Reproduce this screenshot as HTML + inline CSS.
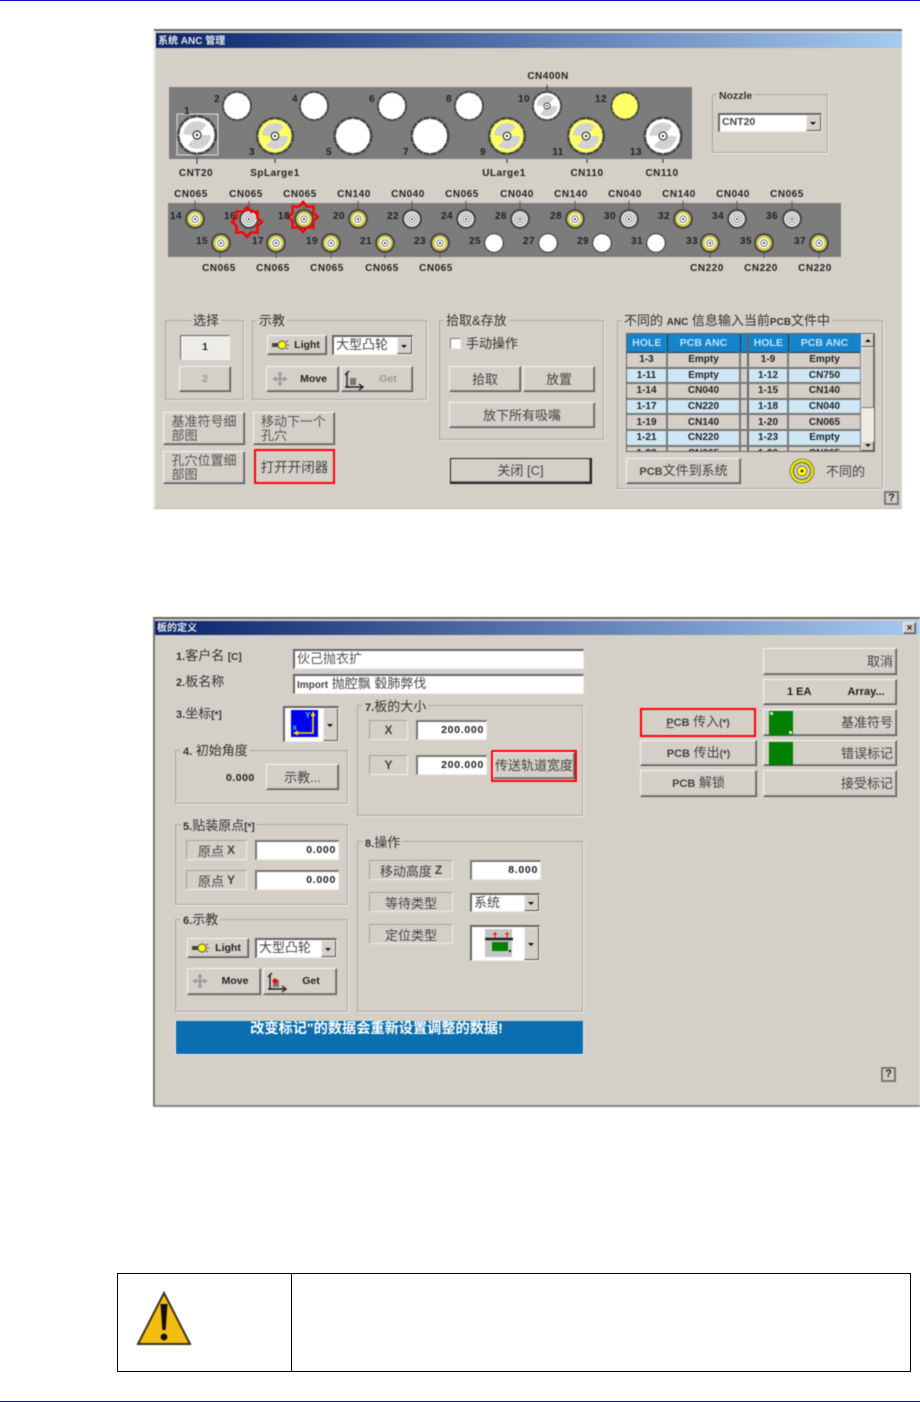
<!DOCTYPE html>
<html lang="zh"><head><meta charset="utf-8"><title>ANC</title>
<style>
html,body{margin:0;padding:0;background:#fff}
#p{position:relative;width:920px;height:1402px;overflow:hidden;background:#fff;font-family:"Liberation Sans","Noto Sans CJK SC",sans-serif;color:#333}
#p div{box-sizing:border-box}
.a{position:absolute}
.dlg{position:absolute;background:#d4d0c8;border-top:2px solid #666}
.tb{position:absolute;background:linear-gradient(90deg,#0a246a,#a6caf0)}
.tt{position:absolute;color:#e8e8e8;font-size:10px;font-weight:bold;white-space:nowrap;line-height:14px}
.b{position:absolute;background:#d4d0c8;border:1px solid;border-color:#f4f4f4 #555 #555 #f4f4f4;box-shadow:inset -1px -1px #888;display:flex;align-items:center;justify-content:center;font-size:13px;line-height:13px;color:#444;white-space:nowrap;text-align:left}
.g{position:absolute;border:1px solid #aaa8a0;box-shadow:1px 1px #eeece8}
.l{position:absolute;background:#d4d0c8;padding:0 2px;font-size:13px;line-height:14px;color:#333;white-space:nowrap}
.t{position:absolute;font-size:13px;line-height:14px;white-space:nowrap;color:#333}
.s{font-size:10px;font-weight:bold}
.i{position:absolute;background:#fff;border:1px solid;border-color:#777 #eee #eee #777;border-top-width:2px;border-left-width:2px;font-size:10.5px;font-weight:bold;text-align:right;padding-right:2px;line-height:17px;color:#222;white-space:nowrap;letter-spacing:.7px}
.sl{position:absolute;border:1px solid;border-color:#a8a49c #eee #eee #a8a49c;display:flex;align-items:center;justify-content:center;font-size:13px;color:#444;white-space:nowrap}
.sl .s{font-size:12px}
.c{position:absolute;background:#fff;border:1px solid;border-color:#666 #eee #eee #666;border-top-width:2px;border-left-width:2px;font-size:13px;line-height:15px;padding-left:2px;color:#444;white-space:nowrap}
.c i{position:absolute;right:0;top:0;bottom:0;width:13px;background:#d4d0c8;border:1px solid;border-color:#eee #555 #555 #eee}
.c i:after{content:"";position:absolute;left:3px;top:50%;margin-top:-1px;border:3px solid transparent;border-top:3px solid #111;border-bottom:0}
table{border-collapse:collapse;table-layout:fixed;font-size:10px;font-weight:bold;color:#222}
td{padding:1px 0 0;text-align:center;border-bottom:2px solid #777;border-right:2px solid #777;height:12.6px;line-height:12px;overflow:hidden}
tr.h td{background:#1584cc;color:#bfe4fa;height:18px;line-height:14px;font-size:10.5px;padding:0;border-bottom:1px solid #333;border-right:1px solid #333}
tr.z td{background:#cfe7f5}
tr td.x{background:#d4d0c8;border-right:2px solid #666}
tr.h td.x{background:#1584cc}
#f{position:absolute;left:0;top:0;width:920px;height:1402px;filter:blur(.4px)}
svg text{font-family:"Liberation Sans",sans-serif;font-weight:bold;font-size:10px;fill:#222;text-anchor:middle;letter-spacing:.5px}
</style></head><body>
<div id="p">
<div class="a" style="left:0;top:0;width:920px;height:1px;background:#1010d0"></div>
<div class="a" style="left:0;top:1401px;width:920px;height:1px;background:#1010d0"></div>

<div id="f">
<!-- Dialog 1 -->
<div class="dlg" style="left:153px;top:29px;width:749px;height:480px;border-left:2px solid #eee;border-bottom:1px solid #bbb"></div>
<div class="tb" style="left:156px;top:33px;width:746px;height:15px"></div>
<div class="tt" style="left:158px;top:35px">系统 ANC 管理</div>

<div class="a" style="left:169px;top:87px;width:523px;height:72px;background:#7c7c7c"></div>
<div class="a" style="left:168px;top:203px;width:673px;height:54px;background:#7c7c7c"></div>

<div class="g" style="left:712px;top:94px;width:116px;height:59px"></div>
<div class="l s" style="left:717px;top:89px;font-size:10.5px">Nozzle</div>
<div class="c" style="left:718px;top:113px;width:104px;height:19px;font-size:10.5px;font-weight:bold;line-height:15px">CNT20<i></i></div>

<div class="g" style="left:165px;top:320px;width:79px;height:80px"></div>
<div class="l" style="left:191px;top:314px">选择</div>
<div class="b" style="left:180px;top:335px;width:50px;height:25px;background:#eeece8;border-color:#666 #eee #eee #666;box-shadow:none;font-size:10.5px;font-weight:bold;color:#222">1</div>
<div class="b" style="left:179px;top:366px;width:52px;height:26px;font-size:10.5px;color:#999;font-weight:bold">2</div>

<div class="g" style="left:252px;top:320px;width:175px;height:80px"></div>
<div class="l" style="left:257px;top:314px">示教</div>
<div class="b s" style="left:267px;top:335px;width:60px;height:20px;padding-left:20px;font-size:10.5px;color:#222">Light</div>
<div class="c" style="left:332px;top:335px;width:81px;height:20px">大型凸轮<i></i></div>
<div class="b s" style="left:266px;top:366px;width:73px;height:26px;padding-left:22px;font-size:10.5px;color:#222">Move</div>
<div class="b s" style="left:341px;top:366px;width:72px;height:26px;padding-left:22px;font-size:10.5px;color:#999">Get</div>

<div class="b" style="left:163px;top:412px;width:82px;height:33px;line-height:14px;color:#555">基准符号细<br>部图</div>
<div class="b" style="left:253px;top:412px;width:82px;height:33px;line-height:14px;color:#555;justify-content:flex-start;padding-left:7px">移动下一个<br>孔穴</div>
<div class="b" style="left:163px;top:451px;width:82px;height:33px;line-height:14px;color:#555">孔穴位置细<br>部图</div>
<div class="b" style="left:254px;top:450px;width:81px;height:34px;color:#444;font-size:13.500px">打开开闭器</div>
<div class="a" style="left:254px;top:449px;width:81px;height:35px;border:2px solid #f00"></div>

<div class="g" style="left:439px;top:320px;width:165px;height:120px"></div>
<div class="l" style="left:444px;top:314px">拾取&amp;存放</div>
<div class="a" style="left:450px;top:338px;width:11px;height:11px;background:#fff;border:1px solid;border-color:#777 #eee #eee #777"></div>
<div class="t" style="left:466px;top:337px">手动操作</div>
<div class="b" style="left:449px;top:366px;width:72px;height:26px">拾取</div>
<div class="b" style="left:523px;top:366px;width:72px;height:26px">放置</div>
<div class="b" style="left:449px;top:402px;width:146px;height:26px">放下所有吸嘴</div>
<div class="b" style="left:450px;top:458px;width:142px;height:26px;border:1px solid #222;border-bottom-width:2px;border-right-width:2px">关闭 [C]</div>

<div class="g" style="left:617px;top:320px;width:266px;height:169px"></div>
<div class="l" style="left:622px;top:314px">不同的 <span class="s">ANC</span> 信息输入当前<span class="s">PCB</span>文件中</div>
<div class="a" style="left:626px;top:333px;width:249px;height:119px;background:#d4d0c8;border:1px solid #666;overflow:hidden">
<table style="width:234px"><colgroup><col style="width:40px"><col style="width:73px"><col style="width:8px"><col style="width:40px"><col style="width:73px"></colgroup>
<tr class="h"><td>HOLE</td><td>PCB ANC</td><td class="x"></td><td>HOLE</td><td>PCB ANC</td></tr>
<tr><td>1-3</td><td>Empty</td><td class="x"></td><td>1-9</td><td>Empty</td></tr>
<tr class="z"><td>1-11</td><td>Empty</td><td class="x"></td><td>1-12</td><td>CN750</td></tr>
<tr><td>1-14</td><td>CN040</td><td class="x"></td><td>1-15</td><td>CN140</td></tr>
<tr class="z"><td>1-17</td><td>CN220</td><td class="x"></td><td>1-18</td><td>CN040</td></tr>
<tr><td>1-19</td><td>CN140</td><td class="x"></td><td>1-20</td><td>CN065</td></tr>
<tr class="z"><td>1-21</td><td>CN220</td><td class="x"></td><td>1-23</td><td>Empty</td></tr>
<tr><td>1-22</td><td>CN065</td><td class="x"></td><td>1-26</td><td>CN065</td></tr>
</table>
<div class="a" style="left:234px;top:0;width:13px;height:117px;background:#ecebe6"></div>
<div class="a" style="left:234px;top:0;width:13px;height:13px;background:#d4d0c8;border:1px solid;border-color:#eee #555 #555 #eee"></div>
<div class="a" style="left:234px;top:13px;width:13px;height:61px;background:#d4d0c8;border:1px solid;border-color:#eee #777 #777 #eee"></div>
<div class="a" style="left:234px;top:107px;width:13px;height:10px;background:#d4d0c8;border:1px solid;border-color:#eee #555 #555 #eee"></div>
<div class="a" style="left:238px;top:5px;border:3px solid transparent;border-bottom:3px solid #111;border-top:0"></div>
<div class="a" style="left:238px;top:110px;border:3px solid transparent;border-top:3px solid #111;border-bottom:0"></div>
</div>
<div class="b" style="left:626px;top:458px;width:115px;height:26px"><span><span class="s" style="font-size:11px">PCB</span>文件到系统</span></div>
<div class="t" style="left:826px;top:465px;color:#444">不同的</div>
<div class="b" style="left:884px;top:491px;width:15px;height:14px;font-size:11px;font-weight:bold;border:2px solid #777;box-shadow:none;color:#222">?</div>

<!-- Dialog 2 -->
<div class="dlg" style="left:153px;top:617px;width:767px;height:490px;border-left:2px solid #777;border-bottom:2px solid #888"></div>
<div class="tb" style="left:155px;top:621px;width:765px;height:14px"></div>
<div class="tt" style="left:157px;top:622px">板的定义</div>
<div class="b" style="left:903px;top:622px;width:13px;height:12px;font-size:10px;font-weight:bold;color:#222">×</div>

<div class="t" style="left:176px;top:649px"><span class="s" style="font-size:11px">1.</span>客户名 <span class="s">[C]</span></div>
<div class="c" style="left:293px;top:649px;width:291px;height:20px;line-height:15px;color:#555">伙己抛衣扩</div>
<div class="t" style="left:176px;top:675px"><span class="s" style="font-size:11px">2.</span>板名称</div>
<div class="c" style="left:293px;top:674px;width:291px;height:20px;line-height:15px;color:#444"><span class="s">Import</span> 抛腔飘 毂肺弊伐</div>
<div class="t" style="left:176px;top:707px"><span class="s" style="font-size:11px">3.</span>坐标<span class="s">[*]</span></div>
<div class="c" style="left:283px;top:706px;width:56px;height:36px"><i style="width:13px"></i></div>

<div class="g" style="left:175px;top:750px;width:173px;height:54px"></div>
<div class="l" style="left:181px;top:744px"><span class="s" style="font-size:11px">4.</span> 初始角度</div>
<div class="t s" style="left:226px;top:771px;font-size:10.5px;color:#222;letter-spacing:.5px">0.000</div>
<div class="b" style="left:266px;top:764px;width:73px;height:26px">示教...</div>

<div class="g" style="left:175px;top:824px;width:173px;height:81px"></div>
<div class="l" style="left:181px;top:819px"><span class="s" style="font-size:11px">5.</span>贴装原点<span class="s">[*]</span></div>
<div class="sl" style="left:186px;top:840px;width:61px;height:20px">原点 <span class="s" style="margin-left:3px">X</span></div>
<div class="i" style="left:255px;top:840px;width:84px;height:20px">0.000</div>
<div class="sl" style="left:186px;top:870px;width:61px;height:20px">原点 <span class="s" style="margin-left:3px">Y</span></div>
<div class="i" style="left:255px;top:870px;width:84px;height:20px">0.000</div>

<div class="g" style="left:175px;top:919px;width:173px;height:93px"></div>
<div class="l" style="left:181px;top:913px"><span class="s" style="font-size:11px">6.</span>示教</div>
<div class="b s" style="left:187px;top:938px;width:62px;height:20px;padding-left:20px;font-size:10.5px;color:#222">Light</div>
<div class="c" style="left:255px;top:938px;width:82px;height:20px">大型凸轮<i></i></div>
<div class="b s" style="left:187px;top:968px;width:74px;height:27px;padding-left:22px;font-size:10.5px;color:#222">Move</div>
<div class="b s" style="left:263px;top:968px;width:74px;height:27px;padding-left:22px;font-size:10.5px;color:#222">Get</div>

<div class="g" style="left:357px;top:705px;width:226px;height:111px"></div>
<div class="l" style="left:363px;top:700px"><span class="s" style="font-size:11px">7.</span>板的大小</div>
<div class="sl s" style="left:369px;top:720px;width:39px;height:20px;font-size:12px">X</div>
<div class="i" style="left:416px;top:720px;width:71px;height:20px">200.000</div>
<div class="sl s" style="left:369px;top:755px;width:39px;height:20px;font-size:12px">Y</div>
<div class="i" style="left:416px;top:755px;width:71px;height:20px">200.000</div>
<div class="b" style="left:493px;top:752px;width:82px;height:27px;font-size:13px"> 传送轨道宽度</div>
<div class="a" style="left:491px;top:750px;width:86px;height:32px;border:2px solid #f00"></div>

<div class="g" style="left:357px;top:841px;width:226px;height:171px"></div>
<div class="l" style="left:363px;top:836px"><span class="s" style="font-size:11px">8.</span>操作</div>
<div class="sl" style="left:369px;top:860px;width:84px;height:20px">移动高度 <span class="s" style="margin-left:3px">Z</span></div>
<div class="i" style="left:470px;top:860px;width:71px;height:20px">8.000</div>
<div class="sl" style="left:369px;top:892px;width:84px;height:20px">等待类型</div>
<div class="c" style="left:470px;top:893px;width:70px;height:19px">系统<i></i></div>
<div class="sl" style="left:369px;top:924px;width:84px;height:20px">定位类型</div>
<div class="c" style="left:470px;top:925px;width:70px;height:36px"><i></i></div>

<div class="a" style="left:175px;top:1021px;width:409px;height:34px;background:#0a6eb0;border:1px solid #e8e8e8;border-top:0;color:#fff;font-size:14.200px;font-weight:bold;text-align:center;line-height:16px;padding-right:6px">改变标记"的数据会重新设置调整的数据!</div>
<div class="b" style="left:881px;top:1067px;width:15px;height:15px;font-size:11px;font-weight:bold;border:2px solid #777;box-shadow:none;color:#222">?</div>

<div class="b" style="left:763px;top:648px;width:134px;height:27px;justify-content:flex-end;padding-right:3px">取消</div>
<div class="b s" style="left:763px;top:679px;width:134px;height:26px;justify-content:flex-start;padding-left:23px;font-size:11px;color:#222">1 EA<span style="margin-left:36px">Array...</span></div>
<div class="b" style="left:763px;top:709px;width:134px;height:27px;justify-content:flex-end;padding-right:3px">基准符号</div>
<div class="b" style="left:763px;top:740px;width:134px;height:26px;justify-content:flex-end;padding-right:3px">错误标记</div>
<div class="b" style="left:763px;top:770px;width:134px;height:27px;justify-content:flex-end;padding-right:3px">接受标记</div>
<div class="a" style="left:769px;top:711px;width:24px;height:24px;background:#008000"></div>
<div class="a" style="left:770px;top:712px;width:3px;height:3px;background:#cfe8cf"></div>
<div class="a" style="left:789px;top:731px;width:3px;height:3px;background:#cfe8cf"></div>
<div class="a" style="left:769px;top:742px;width:24px;height:23px;background:#008000"></div>
<div class="b" style="left:640px;top:708px;width:116px;height:29px;border:2px solid #f00;box-shadow:none;font-size:13px"><span><span class="s" style="font-size:11px;text-decoration:underline">P</span><span class="s" style="font-size:11px">CB</span> 传入<span class="s">(*)</span></span></div>
<div class="b" style="left:640px;top:740px;width:117px;height:26px"><span><span class="s" style="font-size:11px">PCB</span> 传出<span class="s">(*)</span></span></div>
<div class="b" style="left:640px;top:770px;width:117px;height:27px"><span><span class="s" style="font-size:11px">PCB</span> 解锁</span></div>

<svg class="a" style="left:0;top:0" width="920" height="1402" viewBox="0 0 920 1402">
<defs>
<g id="e"><circle r="9.4" fill="#fff" stroke="#444" stroke-width="1.3" stroke-dasharray="3.4 .3"/></g>
<g id="y"><circle r="9.4" fill="#ffff66" stroke="#444" stroke-width="1.3" stroke-dasharray="3.4 .3"/></g>
<g id="bw"><circle r="9.4" fill="#fff" stroke="#444" stroke-width="1.3" stroke-dasharray="3.4 .3"/><circle r="4.6" fill="none" stroke="#d2d2d2" stroke-width="4.6" stroke-dasharray="10.5 4"/><circle r="2" fill="#fff" stroke="#333" stroke-width=".6"/><circle r=".6" fill="#222"/></g>
<g id="by"><circle r="9.4" fill="#ffff66" stroke="#444" stroke-width="1.3" stroke-dasharray="3.4 .3"/><circle r="4.6" fill="none" stroke="#d2d2d2" stroke-width="4.6" stroke-dasharray="10.5 4"/><circle r="2" fill="#fff" stroke="#333" stroke-width=".6"/><circle r=".6" fill="#222"/></g>
<g id="sy"><circle r="10" fill="#4a4a4a"/><circle r="7.8" fill="#d8d050"/><circle r="5.2" fill="#fff"/><circle r="3.2" fill="none" stroke="#777" stroke-width="1"/><circle r="1" fill="#222"/></g>
<g id="sg"><circle r="10" fill="#4a4a4a"/><circle r="7.8" fill="#eee"/><circle r="5.5" fill="none" stroke="#bbb" stroke-width="1.6"/><circle r="3" fill="#fff" stroke="#888"/><circle r="1" fill="#222"/></g>
<polygon id="st" fill="none" stroke="#f00" stroke-width="2.4" points="15,0 10.2,4.2 10.6,10.6 4.2,10.2 0,15 -4.2,10.2 -10.6,10.6 -10.2,4.2 -15,0 -10.2,-4.2 -10.6,-10.6 -4.2,-10.2 0,-15 4.2,-10.2 10.6,-10.6 10.2,-4.2"/>
<g id="lamp"><path d="M0 2h6M0 4h6" stroke="#444" stroke-width="2" fill="none"/><circle cx="10" cy="3" r="4" fill="#ffff00" stroke="#555"/><path d="M14 0l2-1M15 3h2M14 6l2 1" stroke="#555"/></g>
<g id="mv" stroke="#999" stroke-width="2" fill="none"><path d="M-7 0H7M0-7V7"/><path d="M-7 0l3-3v6zM7 0l-3-3v6zM0-7l-3 3h6zM0 7l-3-3h6z" fill="#999" stroke="none"/></g>
<g id="gt" stroke="#222" stroke-width="1.4" fill="none"><path d="M0-8V7H16"/><path d="M-2 7H3M2-9L-2-5M12 4l4 3-4 3"/><rect x="3" y="-2" width="6" height="7" fill="#777" stroke="none"/></g>
</defs>

<rect x="177" y="114" width="41" height="41" fill="#8a8a8a" stroke="#ddd" stroke-width="1"/>
<g stroke="#444" stroke-width="1.2"><path d="M197 157v7M275 159v4M507 159v4M587 159v4M663 159v4M547 85v6"/></g>
<use href="#bw" transform="translate(197 135) scale(2)"/>
<use href="#e" transform="translate(237 106) scale(1.5)"/>
<use href="#by" transform="translate(275 136) scale(1.9)"/>
<use href="#e" transform="translate(314 106) scale(1.5)"/>
<use href="#e" transform="translate(353 136) scale(1.95)"/>
<use href="#e" transform="translate(392 106) scale(1.5)"/>
<use href="#e" transform="translate(430 136) scale(1.95)"/>
<use href="#e" transform="translate(469 106) scale(1.5)"/>
<use href="#by" transform="translate(507 136) scale(1.9)"/>
<use href="#bw" transform="translate(547 106) scale(1.5)"/>
<use href="#by" transform="translate(586 136) scale(1.9)"/>
<use href="#y" transform="translate(625 106) scale(1.45)"/>
<use href="#bw" transform="translate(663 136) scale(1.95)"/>

<g stroke="#555" stroke-width="1"><path d="M195 201v8M249 201v8M304 201v8M358 201v8M412 201v8M466 201v8M520 201v8M575 201v8M629 201v8M683 201v8M737 201v8M792 201v8M220 252v6M276 252v6M331 252v6M385 252v6M440 252v6M710 252v6M764 252v6M819 252v6"/></g>
<use href="#sy" x="195" y="219"/><use href="#sg" x="249" y="219"/><use href="#sy" x="304" y="219"/><use href="#sy" x="358" y="219"/><use href="#sg" x="412" y="219"/><use href="#sg" x="466" y="219"/><use href="#sg" x="520" y="219"/><use href="#sy" x="575" y="219"/><use href="#sg" x="629" y="219"/><use href="#sy" x="683" y="219"/><use href="#sg" x="737" y="219"/><use href="#sg" x="792" y="219"/>
<use href="#sy" x="221" y="243"/><use href="#sy" x="276" y="243"/><use href="#sy" x="331" y="243"/><use href="#sy" x="385" y="243"/><use href="#sy" x="440" y="243"/>
<use href="#e" x="494" y="243"/><use href="#e" x="548" y="243"/><use href="#e" x="602" y="243"/><use href="#e" x="656" y="243"/>
<use href="#sy" x="710" y="243"/><use href="#sy" x="764" y="243"/><use href="#sy" x="819" y="243"/>
<use href="#st" x="247" y="222"/><use href="#st" x="303" y="217"/>

<text x="548" y="79">CN400N</text>
<text x="196" y="176">CNT20</text><text x="275" y="176">SpLarge1</text><text x="504" y="176">ULarge1</text><text x="587" y="176">CN110</text><text x="662" y="176">CN110</text>
<text x="191" y="197">CN065</text><text x="246" y="197">CN065</text><text x="300" y="197">CN065</text><text x="354" y="197">CN140</text><text x="408" y="197">CN040</text><text x="462" y="197">CN065</text><text x="517" y="197">CN040</text><text x="571" y="197">CN140</text><text x="625" y="197">CN040</text><text x="679" y="197">CN140</text><text x="733" y="197">CN040</text><text x="787" y="197">CN065</text>
<text x="219" y="271">CN065</text><text x="273" y="271">CN065</text><text x="327" y="271">CN065</text><text x="382" y="271">CN065</text><text x="436" y="271">CN065</text><text x="707" y="271">CN220</text><text x="761" y="271">CN220</text><text x="815" y="271">CN220</text>
<text x="187" y="114">1</text><text x="217" y="102">2</text><text x="252" y="155">3</text><text x="295" y="102">4</text><text x="329" y="155">5</text><text x="372" y="102">6</text><text x="406" y="155">7</text><text x="449" y="102">8</text><text x="483" y="155">9</text><text x="524" y="102">10</text><text x="558" y="155">11</text><text x="601" y="102">12</text><text x="636" y="155">13</text>
<text x="176" y="219">14</text><text x="230" y="219">16</text><text x="284" y="219">18</text><text x="339" y="219">20</text><text x="393" y="219">22</text><text x="447" y="219">24</text><text x="501" y="219">26</text><text x="556" y="219">28</text><text x="610" y="219">30</text><text x="664" y="219">32</text><text x="718" y="219">34</text><text x="772" y="219">36</text>
<text x="202" y="244">15</text><text x="258" y="244">17</text><text x="312" y="244">19</text><text x="366" y="244">21</text><text x="420" y="244">23</text><text x="475" y="244">25</text><text x="529" y="244">27</text><text x="583" y="244">29</text><text x="637" y="244">31</text><text x="692" y="244">33</text><text x="746" y="244">35</text><text x="800" y="244">37</text>

<circle cx="802" cy="471" r="12" fill="#e8e800" stroke="#444" stroke-width=".6"/><circle cx="802" cy="471" r="8.5" fill="#d4d0c8" stroke="#555"/><circle cx="802" cy="471" r="5" fill="#ff0" stroke="#777"/><circle cx="802" cy="471" r="1.4" fill="#222"/>

<use href="#lamp" transform="translate(272 342)"/>
<use href="#mv" transform="translate(280 379)"/>
<use href="#gt" transform="translate(347 380)"/>
<use href="#lamp" transform="translate(192 945)"/>
<use href="#mv" transform="translate(200 981)"/>
<use href="#gt" transform="translate(270 982)"/><circle cx="275" cy="981" r="2.5" fill="#f00"/>

<rect x="291" y="710" width="27" height="27" fill="#0000f0"/>
<path d="M313 714v19h-18" fill="none" stroke="#ffe000" stroke-width="1.6"/><path d="M313 711l-2.5 5h5zM293 733l5-2.5v5z" fill="#ffe000"/>
<text x="308" y="718" style="fill:#3ad0ff;font-size:8px">Y</text><text x="295" y="730" style="fill:#3ad0ff;font-size:8px">x</text>

<rect x="485" y="929" width="27" height="28" fill="#c4c4c4"/>
<path d="M485 939h28" stroke="#222" stroke-width="2.4"/>
<path d="M493 934h4M495 932v6M505 934h4M507 932v6" stroke="#f00"/>
<rect x="492" y="942" width="16" height="9" fill="#008000"/><rect x="509" y="950" width="2" height="2" fill="#111"/>

<path d="M164 1293 L138 1344 H190 Z" fill="#f4bd14" stroke="#3f3212" stroke-width="2" stroke-linejoin="miter"/>
<path d="M160.500 1304h7l-1.800 26h-3.400z" fill="#111"/><circle cx="164" cy="1337" r="3.400" fill="#111"/>
</svg>
</div>

<div class="a" style="left:117px;top:1273px;width:794px;height:99px;border:1px solid #000"></div>
<div class="a" style="left:291px;top:1273px;width:1px;height:99px;background:#000"></div>
</div>
</body></html>
